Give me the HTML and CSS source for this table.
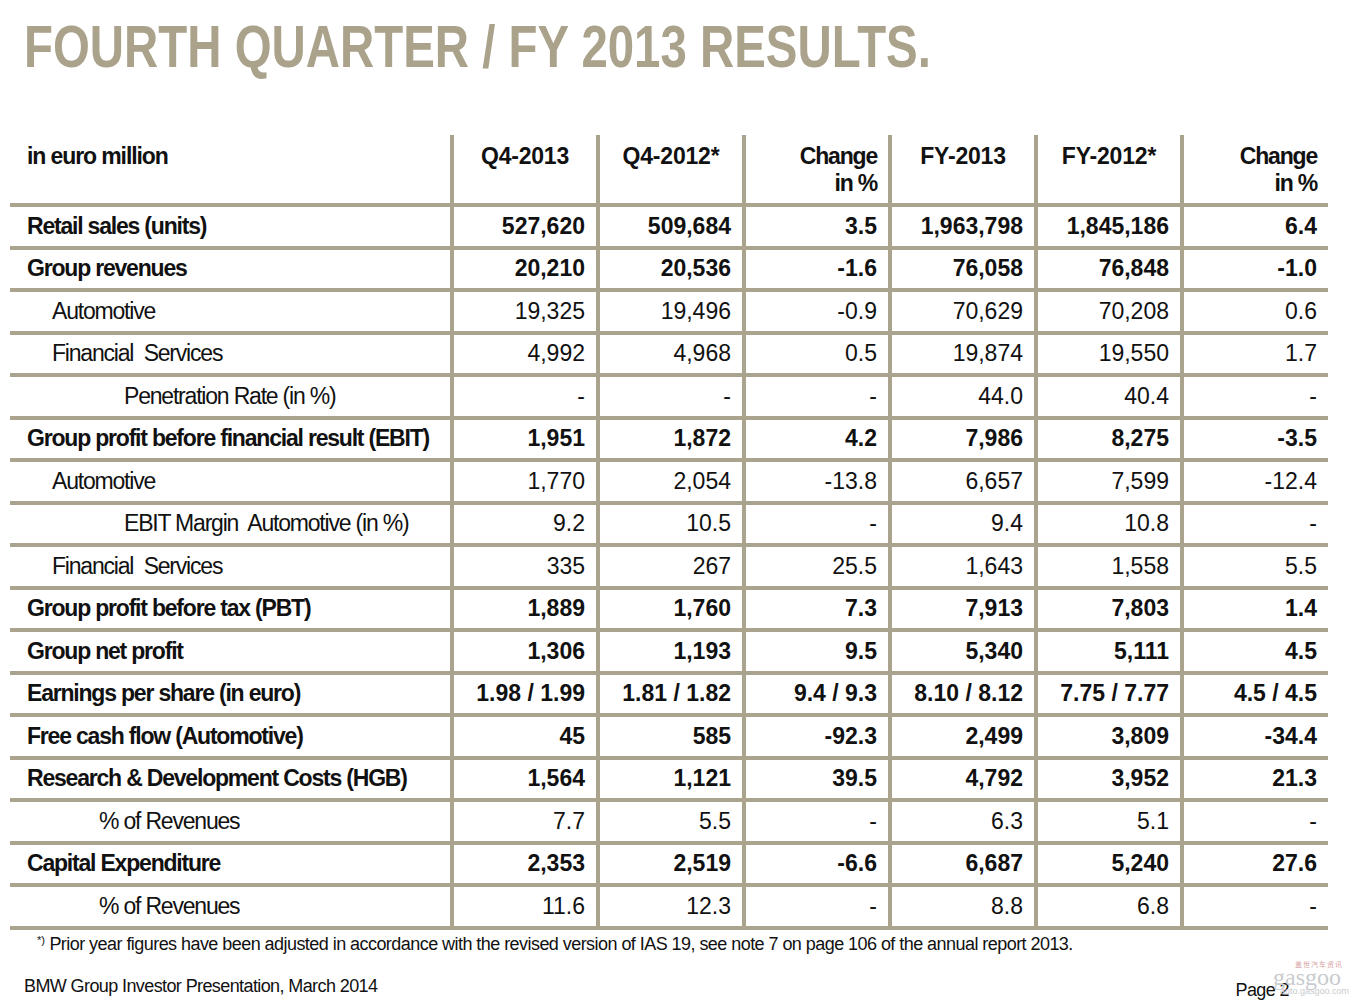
FILE: index.html
```html
<!DOCTYPE html>
<html>
<head>
<meta charset="utf-8">
<link rel="stylesheet" href="styles.css">
</head>
<body>
<h1 class="title"><span class="title-text">FOURTH QUARTER / FY 2013 RESULTS.</span></h1>
<div class="grid">
  <div class="hd lab">in euro million</div>
  <div class="hd ctr">Q4-2013</div>
  <div class="hd ctr">Q4-2012*</div>
  <div class="hd rt">Change<br>in %</div>
  <div class="hd ctr">FY-2013</div>
  <div class="hd ctr">FY-2012*</div>
  <div class="hd rt">Change<br>in %</div>

  <div class="c lab b">Retail sales (units)</div><div class="c n b">527,620</div><div class="c n b">509,684</div><div class="c n b">3.5</div><div class="c n b">1,963,798</div><div class="c n b">1,845,186</div><div class="c n b">6.4</div>
  <div class="c lab b">Group revenues</div><div class="c n b">20,210</div><div class="c n b">20,536</div><div class="c n b">-1.6</div><div class="c n b">76,058</div><div class="c n b">76,848</div><div class="c n b">-1.0</div>
  <div class="c lab i1">Automotive</div><div class="c n">19,325</div><div class="c n">19,496</div><div class="c n">-0.9</div><div class="c n">70,629</div><div class="c n">70,208</div><div class="c n">0.6</div>
  <div class="c lab i1">Financial&nbsp; Services</div><div class="c n">4,992</div><div class="c n">4,968</div><div class="c n">0.5</div><div class="c n">19,874</div><div class="c n">19,550</div><div class="c n">1.7</div>
  <div class="c lab i2">Penetration Rate (in %)</div><div class="c n">-</div><div class="c n">-</div><div class="c n">-</div><div class="c n">44.0</div><div class="c n">40.4</div><div class="c n">-</div>
  <div class="c lab b">Group profit before financial result (EBIT)</div><div class="c n b">1,951</div><div class="c n b">1,872</div><div class="c n b">4.2</div><div class="c n b">7,986</div><div class="c n b">8,275</div><div class="c n b">-3.5</div>
  <div class="c lab i1">Automotive</div><div class="c n">1,770</div><div class="c n">2,054</div><div class="c n">-13.8</div><div class="c n">6,657</div><div class="c n">7,599</div><div class="c n">-12.4</div>
  <div class="c lab i2">EBIT Margin&nbsp; Automotive (in %)</div><div class="c n">9.2</div><div class="c n">10.5</div><div class="c n">-</div><div class="c n">9.4</div><div class="c n">10.8</div><div class="c n">-</div>
  <div class="c lab i1">Financial&nbsp; Services</div><div class="c n">335</div><div class="c n">267</div><div class="c n">25.5</div><div class="c n">1,643</div><div class="c n">1,558</div><div class="c n">5.5</div>
  <div class="c lab b">Group profit before tax (PBT)</div><div class="c n b">1,889</div><div class="c n b">1,760</div><div class="c n b">7.3</div><div class="c n b">7,913</div><div class="c n b">7,803</div><div class="c n b">1.4</div>
  <div class="c lab b">Group net profit</div><div class="c n b">1,306</div><div class="c n b">1,193</div><div class="c n b">9.5</div><div class="c n b">5,340</div><div class="c n b">5,111</div><div class="c n b">4.5</div>
  <div class="c lab b">Earnings per share (in euro)</div><div class="c n b">1.98 / 1.99</div><div class="c n b">1.81 / 1.82</div><div class="c n b">9.4 / 9.3</div><div class="c n b">8.10 / 8.12</div><div class="c n b">7.75 / 7.77</div><div class="c n b">4.5 / 4.5</div>
  <div class="c lab b">Free cash flow (Automotive)</div><div class="c n b">45</div><div class="c n b">585</div><div class="c n b">-92.3</div><div class="c n b">2,499</div><div class="c n b">3,809</div><div class="c n b">-34.4</div>
  <div class="c lab b">Research &amp; Development Costs (HGB)</div><div class="c n b">1,564</div><div class="c n b">1,121</div><div class="c n b">39.5</div><div class="c n b">4,792</div><div class="c n b">3,952</div><div class="c n b">21.3</div>
  <div class="c lab i3">% of Revenues</div><div class="c n">7.7</div><div class="c n">5.5</div><div class="c n">-</div><div class="c n">6.3</div><div class="c n">5.1</div><div class="c n">-</div>
  <div class="c lab b">Capital Expenditure</div><div class="c n b">2,353</div><div class="c n b">2,519</div><div class="c n b">-6.6</div><div class="c n b">6,687</div><div class="c n b">5,240</div><div class="c n b">27.6</div>
  <div class="c lab i3">% of Revenues</div><div class="c n">11.6</div><div class="c n">12.3</div><div class="c n">-</div><div class="c n">8.8</div><div class="c n">6.8</div><div class="c n">-</div>
</div>
<p class="note"><span class="sup">*)</span> Prior year figures have been adjusted in accordance with the revised version of IAS 19, see note 7 on page 106 of the annual report 2013.</p>
<div class="footer">
  <span>BMW Group Investor Presentation, March 2014</span>
  <span class="page">Page 2</span>
</div>
<div class="wm">
  <div class="wm-cn">盖世汽车资讯</div>
  <div class="wm-logo">gasgoo</div>
  <div class="wm-url">auto.gasgoo.com</div>
</div>
</body>
</html>
```

FILE: styles.css
```css
html, body {
  margin: 0;
  padding: 0;
  background: #fff;
}
body {
  width: 1350px;
  height: 1000px;
  position: relative;
  overflow: hidden;
  font-family: "Liberation Sans", Arial, sans-serif;
  color: #111;
}
.title {
  margin: 0;
  padding: 17px 0 0 24px;
  height: 60px;
  font-size: 60px;
  line-height: 60px;
  font-weight: bold;
  color: #aaa28b;
  white-space: nowrap;
}
.title-text {
  display: inline-block;
  transform: scaleX(0.79);
  transform-origin: left center;
}
.grid {
  margin: 58px 0 0 10px;
  width: 1318px;
  display: grid;
  grid-template-columns: 440px 142px 142px 142px 142px 142px 144px;
  grid-template-rows: 68px repeat(17, 38.5px);
  column-gap: 4px;
  row-gap: 4px;
  padding-bottom: 4px;
  background: #aaa38d;
}
.hd {
  background: #fff;
  padding-top: 8px;
  font-size: 23px;
  line-height: 27px;
  font-weight: bold;
}
.hd.lab { padding-left: 17px; letter-spacing: -1.1px; }
.hd.ctr { text-align: center; letter-spacing: -0.2px; }
.hd.rt { text-align: right; padding-right: 11px; letter-spacing: -1.2px; }
.c {
  background: #fff;
  display: flex;
  align-items: center;
  font-size: 23px;
  white-space: nowrap;
}
.c.n {
  justify-content: flex-end;
  padding-right: 11px;
}
.c.lab { letter-spacing: -1.2px; }
.b { font-weight: bold; }
.lab { padding-left: 17px; }
.i1 { padding-left: 42px; }
.i2 { padding-left: 114px; }
.i3 { padding-left: 89px; }
.note {
  margin: 1px 0 0 37px;
  font-size: 18px;
  line-height: 18px;
  letter-spacing: -0.55px;
}
.sup {
  font-size: 11px;
  vertical-align: 6px;
  letter-spacing: 0;
}
.footer {
  margin-top: 24px;
  padding: 0 61px 0 24px;
  display: flex;
  justify-content: space-between;
  font-size: 18px;
  line-height: 18px;
  letter-spacing: -0.6px;
}
.page { padding-top: 4px; }
.wm {
  position: absolute;
  left: 1266px;
  top: 960px;
  width: 82px;
  text-align: center;
  pointer-events: none;
}
.wm-cn {
  font-family: "Noto Sans CJK SC", sans-serif;
  font-size: 7px;
  line-height: 8px;
  color: #d6a3a3;
  padding-left: 24px;
  letter-spacing: 1px;
}
.wm-logo {
  font-family: "Liberation Serif", serif;
  font-size: 24px;
  line-height: 18px;
  color: #c9cbce;
}
.wm-url {
  font-family: "Liberation Sans", sans-serif;
  font-size: 9px;
  line-height: 11px;
  color: #c9cbce;
  padding-left: 14px;
}
```
